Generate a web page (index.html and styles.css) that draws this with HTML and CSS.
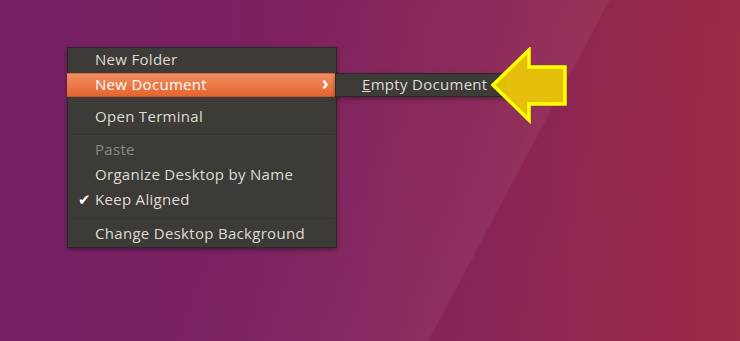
FILE: index.html
```html
<!DOCTYPE html>
<html lang="en">
<head>
    <meta charset="UTF-8">
    <title>Desktop menu</title>
    <link rel="stylesheet" href="styles.css">
</head>
<body>

<div class="desktop">
    <div class="light-band"></div>

    <!-- Контекстное меню рабочего стола -->
    <ul class="menu">
        <li class="item">New Folder</li>
        <li class="item active">
            New Document
            <span class="chevron">&#x203A;</span>
            <ul class="submenu">
                <li class="item"><u>E</u>mpty Document</li>
            </ul>
        </li>
        <li class="sep"></li>
        <li class="item">Open Terminal</li>
        <li class="sep"></li>
        <li class="item tall disabled">Paste</li>
        <li class="item tall">Organize Desktop by Name</li>
        <li class="item tall"><span class="check">&#x2714;</span>Keep Aligned</li>
        <li class="sep"></li>
        <li class="item">Change Desktop Background</li>
    </ul>

    <!-- Жёлтая стрелка-подсказка -->
    <svg class="pointer" width="84" height="80" viewBox="0 0 84 80">
        <polygon points="4,38 40,3 40,20 76,20 76,57 40,57 40,73"
                 fill="rgba(240,212,0,0.88)" stroke="#ffff00" stroke-width="3.5" stroke-linejoin="miter"/>
    </svg>
</div>

</body>
</html>
```

FILE: styles.css
```css
html, body {
    margin: 0;
    padding: 0;
    height: 100%;
    overflow: hidden;
}

.desktop {
    position: relative;
    width: 740px;
    height: 341px;
    background: linear-gradient(90deg, #761f66 0%, #7c2160 35%, #8a2557 65%, #9c2b46 100%);
    font-family: "Open Sans", "Noto Sans", sans-serif;
    font-size: 15px;
    letter-spacing: 0.3px;
}

/* диагональная светлая полоса на обоях */
.light-band {
    position: absolute;
    inset: 0;
    background: linear-gradient(118deg, rgba(255,255,255,0) 35%, rgba(255,255,255,0.03) 58%, rgba(255,255,255,0.05) 66%, rgba(0,0,0,0.02) 66.3%, rgba(0,0,0,0) 85%);
}

.menu {
    position: absolute;
    left: 67px;
    top: 47px;
    width: 268px;
    margin: 0;
    padding: 1px 0 0 0;
    list-style: none;
    background-color: #3c3b37;
    border: 1px solid #2a2926;
    box-shadow: 0 2px 4px rgba(0, 0, 0, 0.35);
    color: #dfdbd2;
}

.item {
    position: relative;
    height: 24px;
    line-height: 21px;
    padding-left: 27px;
    white-space: nowrap;
}

.item.tall {
    height: 25px;
}

.item.active {
    margin: 0 -1px;
    padding-left: 28px;
    background: linear-gradient(#f18d5f, #e5652f);
    border-top: 1px solid #d76a3b;
    border-bottom: 1px solid #c7552a;
    height: 22px;
    line-height: 20px;
    color: #ffffff;
}

.item.disabled {
    color: #8c8880;
}

.chevron {
    position: absolute;
    right: 8px;
    top: -1px;
    font-size: 19px;
    font-weight: bold;
}

.check {
    position: absolute;
    left: 10px;
    font-size: 15px;
    color: #ffffff;
}

.sep {
    height: 9px;
    margin: 0 4px;
    background: linear-gradient(#3c3b37 4px, #33322f 4px, #33322f 5px, #424139 5px, #3c3b37 6px);
}

.submenu {
    position: absolute;
    left: 268px;
    top: -1px;
    width: 168px;
    margin: 0;
    padding: 0;
    list-style: none;
    background-color: #3c3b37;
    border: 1px solid #2a2926;
    box-shadow: 0 2px 4px rgba(0, 0, 0, 0.35);
}

.submenu .item {
    height: 22px;
    line-height: 20px;
    padding-left: 26px;
    color: #dfdbd2;
}

.pointer {
    position: absolute;
    left: 489px;
    top: 47px;
}
```
